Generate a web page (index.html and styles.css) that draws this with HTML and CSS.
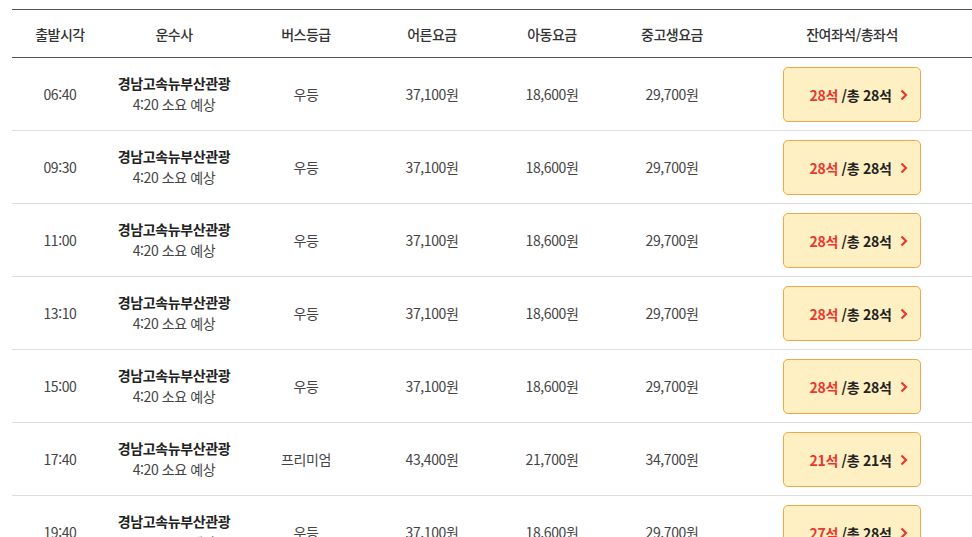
FILE: index.html
```html
<!DOCTYPE html>
<html lang="ko">
<head>
  <meta charset="UTF-8" />
  <meta name="viewport" content="width=device-width, initial-scale=1.0"/>
  <title>배차 조회</title>
  <link rel="stylesheet" href="styles.css">
</head>
<body>
  <div class="bus-list">
    <table class="bus-table">
      <colgroup>
        <col class="c-time">
        <col class="c-comp">
        <col class="c-grade">
        <col class="c-fare">
        <col class="c-fare">
        <col class="c-fare">
        <col class="c-seat">
      </colgroup>
      <thead>
        <tr>
          <th>출발시각</th>
          <th>운수사</th>
          <th>버스등급</th>
          <th>어른요금</th>
          <th>아동요금</th>
          <th>중고생요금</th>
          <th>잔여좌석/총좌석</th>
        </tr>
      </thead>
      <tbody>
        <tr>
          <td>06:40</td>
          <td><strong class="comp">경남고속뉴부산관광</strong><span class="dur">4:20 소요 예상</span></td>
          <td>우등</td>
          <td>37,100원</td>
          <td>18,600원</td>
          <td>29,700원</td>
          <td><button class="seat-btn"><span class="left">28석</span>&nbsp;/총 28석<svg class="arr" viewBox="0 0 8 12"><path d="M1.5 1.5 L6 6 L1.5 10.5"/></svg></button></td>
        </tr>
        <tr>
          <td>09:30</td>
          <td><strong class="comp">경남고속뉴부산관광</strong><span class="dur">4:20 소요 예상</span></td>
          <td>우등</td>
          <td>37,100원</td>
          <td>18,600원</td>
          <td>29,700원</td>
          <td><button class="seat-btn"><span class="left">28석</span>&nbsp;/총 28석<svg class="arr" viewBox="0 0 8 12"><path d="M1.5 1.5 L6 6 L1.5 10.5"/></svg></button></td>
        </tr>
        <tr>
          <td>11:00</td>
          <td><strong class="comp">경남고속뉴부산관광</strong><span class="dur">4:20 소요 예상</span></td>
          <td>우등</td>
          <td>37,100원</td>
          <td>18,600원</td>
          <td>29,700원</td>
          <td><button class="seat-btn"><span class="left">28석</span>&nbsp;/총 28석<svg class="arr" viewBox="0 0 8 12"><path d="M1.5 1.5 L6 6 L1.5 10.5"/></svg></button></td>
        </tr>
        <tr>
          <td>13:10</td>
          <td><strong class="comp">경남고속뉴부산관광</strong><span class="dur">4:20 소요 예상</span></td>
          <td>우등</td>
          <td>37,100원</td>
          <td>18,600원</td>
          <td>29,700원</td>
          <td><button class="seat-btn"><span class="left">28석</span>&nbsp;/총 28석<svg class="arr" viewBox="0 0 8 12"><path d="M1.5 1.5 L6 6 L1.5 10.5"/></svg></button></td>
        </tr>
        <tr>
          <td>15:00</td>
          <td><strong class="comp">경남고속뉴부산관광</strong><span class="dur">4:20 소요 예상</span></td>
          <td>우등</td>
          <td>37,100원</td>
          <td>18,600원</td>
          <td>29,700원</td>
          <td><button class="seat-btn"><span class="left">28석</span>&nbsp;/총 28석<svg class="arr" viewBox="0 0 8 12"><path d="M1.5 1.5 L6 6 L1.5 10.5"/></svg></button></td>
        </tr>
        <tr>
          <td>17:40</td>
          <td><strong class="comp">경남고속뉴부산관광</strong><span class="dur">4:20 소요 예상</span></td>
          <td>프리미엄</td>
          <td>43,400원</td>
          <td>21,700원</td>
          <td>34,700원</td>
          <td><button class="seat-btn"><span class="left">21석</span>&nbsp;/총 21석<svg class="arr" viewBox="0 0 8 12"><path d="M1.5 1.5 L6 6 L1.5 10.5"/></svg></button></td>
        </tr>
        <tr>
          <td>19:40</td>
          <td><strong class="comp">경남고속뉴부산관광</strong><span class="dur">4:20 소요 예상</span></td>
          <td>우등</td>
          <td>37,100원</td>
          <td>18,600원</td>
          <td>29,700원</td>
          <td><button class="seat-btn"><span class="left">27석</span>&nbsp;/총 28석<svg class="arr" viewBox="0 0 8 12"><path d="M1.5 1.5 L6 6 L1.5 10.5"/></svg></button></td>
        </tr>
      </tbody>
    </table>
  </div>
</body>
</html>
```

FILE: styles.css
```css
body {
  margin: 0;
  background: #fff;
  font-family: "Noto Sans CJK KR", "Noto Sans", sans-serif;
  color: #444;
}

.bus-list {
  padding: 9px 0 0 12px;
}

.bus-table {
  width: 960px;
  border-collapse: collapse;
  table-layout: fixed;
  border-top: 1px solid #555;
}

.c-time { width: 96px; }
.c-comp { width: 132px; }
.c-grade { width: 132px; }
.c-fare { width: 120px; }
.c-seat { width: 240px; }

th {
  height: 47px;
  padding: 0;
  font-size: 14px;
  font-weight: 500;
  color: #333;
  letter-spacing: -0.5px;
  border-bottom: 1px solid #555;
  text-align: center;
  vertical-align: middle;
}

td {
  height: 72px;
  padding: 0;
  font-size: 14px;
  color: #444;
  letter-spacing: -0.4px;
  text-align: center;
  vertical-align: middle;
  border-bottom: 1px solid #ddd;
}

.comp {
  display: block;
  font-weight: 700;
  color: #222;
  line-height: 21px;
}

.dur {
  display: block;
  line-height: 21px;
}

.seat-btn {
  display: inline-flex;
  align-items: center;
  justify-content: center;
  width: 138px;
  height: 55px;
  margin-top: 1px;
  padding: 0 8px 0 22px;
  background: #fff0c4;
  border: 1px solid #f5a646;
  border-radius: 5px;
  font-family: inherit;
  font-size: 14px;
  font-weight: 700;
  color: #222;
  letter-spacing: -0.3px;
  cursor: pointer;
}

.seat-btn .left {
  color: #e8382f;
}

.seat-btn .arr {
  width: 8px;
  height: 12px;
  margin-left: 9px;
  fill: none;
  stroke: #e8382f;
  stroke-width: 2.2;
}
```
